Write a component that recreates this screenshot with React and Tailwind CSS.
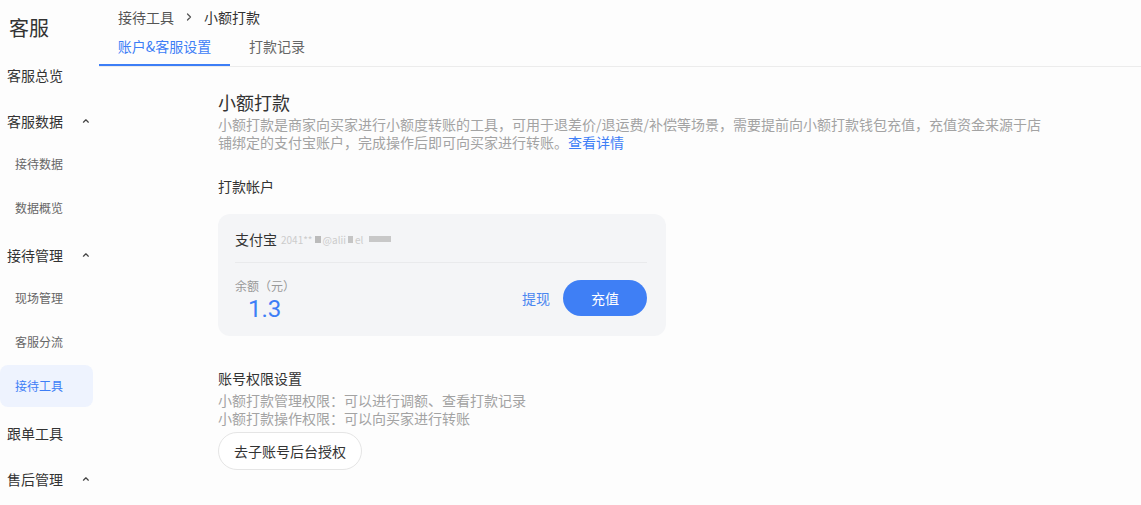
import { ChevronUp, ChevronRight } from "lucide-react";

const font = { fontFamily: '"Noto Sans CJK SC", "Noto Sans", sans-serif' };

function Group({ label, open }) {
  return (
    <div className="flex h-[46px] items-center pl-[7px] pr-2 pt-[6px] text-[14px] text-[#333]">
      <span className="w-[76px]">{label}</span>
      {open && <ChevronUp size={10} strokeWidth={3} className="text-[#444]" />}
    </div>
  );
}

function Sub({ label, active }) {
  return (
    <div className="h-[44px] pr-[6px] pt-[2px]">
      <div
        className={
          "flex h-[42px] items-center rounded-lg pl-[15px] text-[12px] " +
          (active ? "bg-[#eef3fe] text-[#3d7ef6]" : "text-[#666]")
        }
      >
        {label}
      </div>
    </div>
  );
}

export default function App() {
  return (
    <div className="flex h-[505px] w-[1141px] overflow-hidden bg-[#fdfdfd]" style={font}>
      {/* Sidebar */}
      <aside className="w-[99px] shrink-0">
        <div className="h-[49px] pt-[13px] pl-[9px] text-[20px] text-[#333]">客服</div>
        <Group label="客服总览" />
        <Group label="客服数据" open />
        <Sub label="接待数据" />
        <Sub label="数据概览" />
        <Group label="接待管理" open />
        <Sub label="现场管理" />
        <Sub label="客服分流" />
        <Sub label="接待工具" active />
        <Group label="跟单工具" />
        <Group label="售后管理" open />
      </aside>

      {/* Main */}
      <main className="flex-1">
        <div className="flex h-[34px] items-center gap-[9px] pl-[19px] text-[14px] text-[#555]">
          <span>接待工具</span>
          <ChevronRight size={12} strokeWidth={2.5} className="text-[#555]" />
          <span className="text-[#333]">小额打款</span>
        </div>
        <div className="flex h-[33px] border-b border-[#ececec] text-[14px]">
          <div className="flex w-[131px] items-start justify-center border-b-2 border-[#3d7ef6] pt-[2px] text-[#3d7ef6]">
            账户&amp;客服设置
          </div>
          <div className="pl-[19px] pt-[2px] text-[#666]">打款记录</div>
        </div>

        <section className="pl-[119px] pt-[22px]">
          <h1 className="text-[18px] leading-[26px] text-[#333]">小额打款</h1>
          <p className="text-[14px] leading-[18px] text-[#a3a3a3]">
            小额打款是商家向买家进行小额度转账的工具，可用于退差价/退运费/补偿等场景，需要提前向小额打款钱包充值，充值资金来源于店
            <br />
            铺绑定的支付宝账户，完成操作后即可向买家进行转账。
            <span className="text-[#3d7ef6]">查看详情</span>
          </p>

          <div className="mt-[25px] text-[14px] text-[#333]">打款帐户</div>

          <div className="mt-[17px] w-[448px] rounded-xl bg-[#f4f5f7] pl-[17px] pr-[19px]">
            <div className="flex h-[49px] items-center border-b border-[#e9eaec] pt-[2px] text-[14px] text-[#333]">
              <span>支付宝</span>
              <span className="ml-[4px] flex items-center gap-[2px] text-[10px] text-[#ccc]">
                <span>2041**</span>
                <span className="h-[7px] w-[6px] bg-[#bbb]" />
                <span>@alii</span>
                <span className="h-[7px] w-[5px] bg-[#c5c5c5]" />
                <span>el</span>
                <span className="ml-[4px] h-[6px] w-[22px] bg-[#c8c8c8]" />
              </span>
            </div>
            <div className="flex h-[73px] items-center justify-between">
              <div className="pt-[2px]">
                <div className="text-[12px] leading-[16px] text-[#999]">余额（元）</div>
                <div
                  className="pl-[13px] text-[24px] leading-[30px] text-[#3d7ef6]"
                  style={{ fontFamily: "Roboto, sans-serif" }}
                >
                  1.3
                </div>
              </div>
              <div className="flex items-center gap-[13px] pb-[3px]">
                <span className="text-[14px] text-[#4a86f0]">提现</span>
                <button className="h-[36px] w-[84px] rounded-full bg-[#3f7ff5] text-[14px] text-white">
                  充值
                </button>
              </div>
            </div>
          </div>

          <div className="mt-[33px] text-[14px] leading-[18px] text-[#333]">账号权限设置</div>
          <div className="mt-[4px] text-[14px] leading-[18px] text-[#a3a3a3]">
            <div>小额打款管理权限：可以进行调额、查看打款记录</div>
            <div>小额打款操作权限：可以向买家进行转账</div>
          </div>
          <button className="mt-[5px] h-[38px] rounded-full border border-[#e5e5e5] bg-white px-[15px] text-[14px] text-[#333]">
            去子账号后台授权
          </button>
        </section>
      </main>
    </div>
  );
}
